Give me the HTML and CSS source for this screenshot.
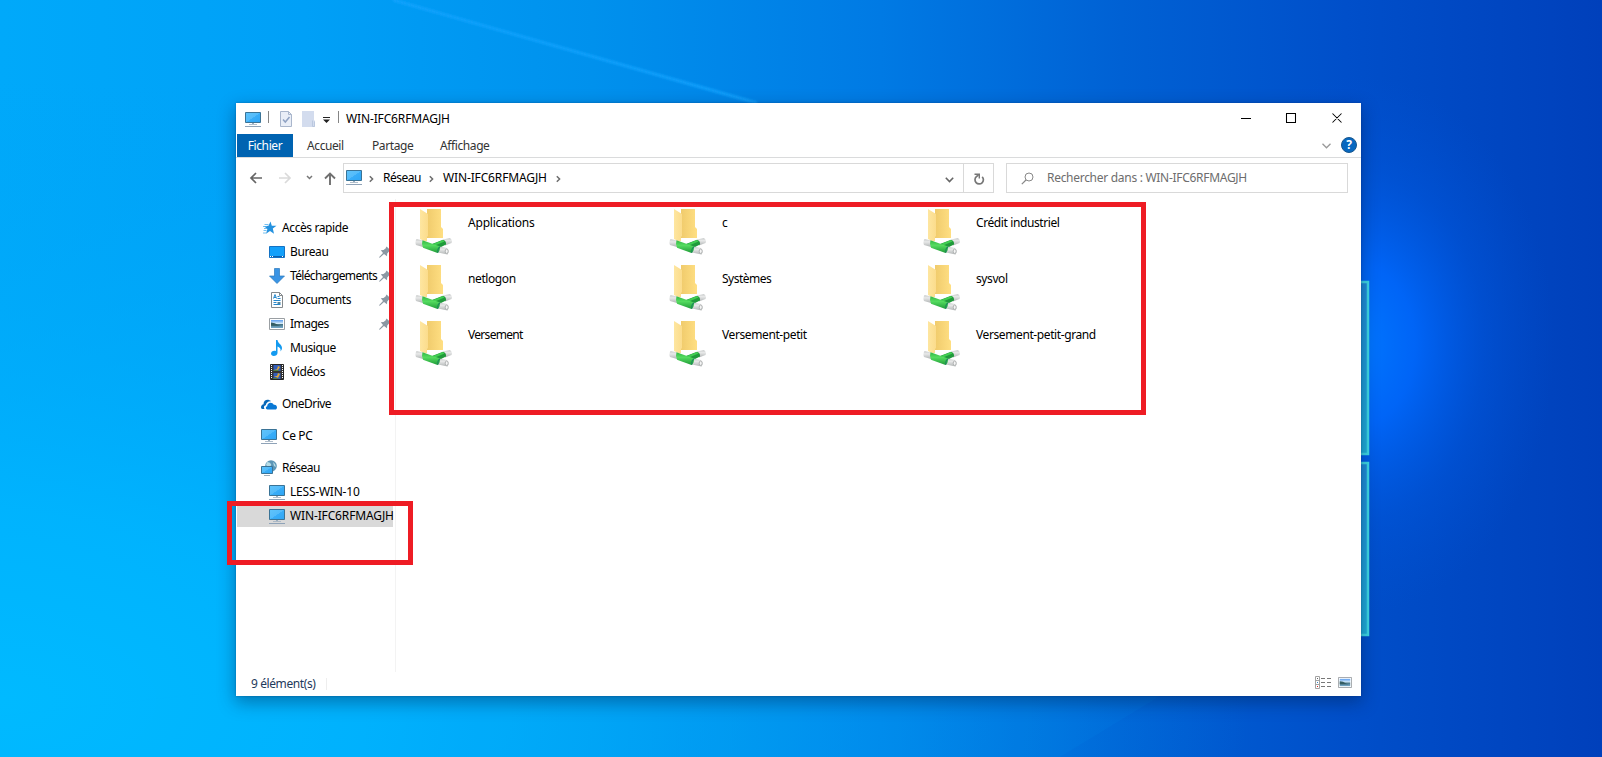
FILE: index.html
```html
<!DOCTYPE html>
<html lang="fr">
<head>
<meta charset="utf-8">
<title>WIN-IFC6RFMAGJH</title>
<link rel="stylesheet" href="styles.css">
</head>
<body>
<svg class="wallpaper" viewBox="0 0 1602 757" aria-hidden="true">
  <defs>
    <linearGradient id="sky" x1="0" x2="1" y1="0" y2="0">
      <stop offset="0" stop-color="#00a9fa"/><stop offset=".19" stop-color="#00a0f7"/><stop offset=".37" stop-color="#0091ed"/>
      <stop offset=".55" stop-color="#007ae4"/><stop offset=".7" stop-color="#0061d4"/><stop offset=".84" stop-color="#004fca"/><stop offset="1" stop-color="#0040bb"/>
    </linearGradient>
    <radialGradient id="corner" gradientUnits="userSpaceOnUse" cx="0" cy="0" r="1" gradientTransform="translate(0 700) scale(1250 620)">
      <stop offset="0" stop-color="#00baff"/><stop offset=".3" stop-color="#00b6ff" stop-opacity=".8"/><stop offset="1" stop-color="#00a0f4" stop-opacity="0"/>
    </radialGradient>
    <radialGradient id="glow"><stop offset="0" stop-color="#0078ff"/><stop offset=".3" stop-color="#0069ff" stop-opacity=".85"/><stop offset=".65" stop-color="#005ce8" stop-opacity=".35"/><stop offset="1" stop-color="#0054d8" stop-opacity="0"/></radialGradient>
    <linearGradient id="pane" x1="0" x2="0" y1="0" y2="1"><stop offset="0" stop-color="#1f8cd8"/><stop offset="1" stop-color="#1fb0da"/></linearGradient>
    <filter id="soft" x="-5%" y="-20%" width="110%" height="140%"><feGaussianBlur stdDeviation="1"/></filter>
  </defs>
  <rect width="1602" height="757" fill="url(#sky)"/>
  <rect width="1250" height="757" fill="url(#corner)"/>
  <ellipse cx="1355" cy="345" rx="200" ry="270" fill="url(#glow)"/>
  <path d="M393 0 757 103" stroke="#16a4ff" stroke-width="3" opacity=".8" filter="url(#soft)"/>
  <path d="M0 716 236 690 1160 696 1060 757H0Z" fill="#00b8ff" opacity=".06"/>
  <g fill="url(#pane)" stroke="#3fdae6" stroke-width="2.500"><path d="M1340 282h28v172h-28z"/><path d="M1340 463h28v172h-28z"/></g>
</svg>

<svg class="symbols" aria-hidden="true">
  <defs>
    <linearGradient id="screen" x1="0" x2="1" y1="0" y2="1"><stop offset="0" stop-color="#5fc4fb"/><stop offset=".5" stop-color="#54bbfa"/><stop offset=".52" stop-color="#38adf8"/><stop offset="1" stop-color="#2fa5f5"/></linearGradient>
    <linearGradient id="flap" x1="0" x2="1"><stop offset="0" stop-color="#fee6a0"/><stop offset="1" stop-color="#fbdc8c"/></linearGradient>
    <linearGradient id="back" x1="0" x2="1"><stop offset="0" stop-color="#f0cb6c"/><stop offset="1" stop-color="#ffdf83"/></linearGradient>
    <linearGradient id="pipe" x1="0" x2="0" y1="0" y2="1"><stop offset="0" stop-color="#32b545"/><stop offset=".4" stop-color="#55dc60"/><stop offset="1" stop-color="#209b38"/></linearGradient>
    <linearGradient id="tube" x1="0" x2="0" y1="0" y2="1"><stop offset="0" stop-color="#c6c9c9"/><stop offset=".35" stop-color="#e8e9e9"/><stop offset="1" stop-color="#b0b4b4"/></linearGradient>
    <linearGradient id="photo" x1="0" x2="0" y1="0" y2="1"><stop offset="0" stop-color="#5a9cf0"/><stop offset=".45" stop-color="#d7ecf8"/><stop offset=".55" stop-color="#477485"/><stop offset="1" stop-color="#76aacb"/></linearGradient>
    <symbol id="pc" viewBox="0 0 16 16">
      <path d="M.5 1.500h15v10H.5z" fill="url(#screen)" stroke="#3a7396"/>
      <path d="M7 12h2v1H7z" fill="#9aaec0"/><path d="M4 13h8v.8H4z" fill="#9fb0c0"/><path d="M0 15h16v1H0z" fill="#8fa3b8"/>
    </symbol>
    <symbol id="share" viewBox="0 0 37 46">
      <path d="M12 0h14v18l2 2v9H12z" fill="url(#back)"/>
      <path d="M5 0 13 5v22l-1 1v4H9L5 30z" fill="url(#flap)"/>
      <path d="M1.500 30Q-.3 33 1 36L8 38V31.500z" fill="url(#tube)"/>
      <path d="M28 30.500 35 29Q38 31.500 36.500 34L30 36.500z" fill="url(#tube)"/>
      <path d="M17 35 28 30.700Q31.500 32 31 35.500L22 40z" fill="#209a3b"/>
      <path d="M18 35 28 30.900 29.500 32.500 20 36.500z" fill="#41cd52"/>
      <path d="M24 37.500 32 39Q35 42 32.500 45.500L23 43.500z" fill="url(#tube)"/>
      <path d="M7.500 31.200Q6.300 35 8 38.800L22.500 44q2.800-2 2.500-6.500z" fill="url(#pipe)"/>
      <path d="M25 37.700q-2.700 2-2.200 6" fill="none" stroke="#1d8b5c" stroke-width="1.200"/>
      <ellipse cx="31.700" cy="42.200" rx="1.500" ry="2.200" fill="#f5f5f5" stroke="#a9adad" stroke-width=".9"/>
    </symbol>
    <symbol id="pin" viewBox="0 0 12 12"><path d="M7.500.5 11.800 4.500 10 5.500 8.200 7.500 8 10.300 5 8 .8 11.800 0 11.200 4 7 1.800 4.300 4.500 4.100 6.500 2.500z" fill="#8b98a3"/></symbol>
    <symbol id="next" viewBox="0 0 5 8"><path d="m.8 1.200 2.800 2.800L.8 6.800" fill="none" stroke="#6d6d6d" stroke-width="1.500"/></symbol>
    <symbol id="photoframe" viewBox="0 0 16 12"><path d="M.5.5h15v11H.5z" fill="#fff" stroke="#9a9fa3"/><path d="M2 2h12v8H2z" fill="url(#photo)"/><path d="M2 4.500q4 0 7 2.500l3 .8H2z" fill="#335c62"/></symbol>
  </defs>
</svg>

<main class="window">
  <header class="titlebar">
    <svg class="i16"><use href="#pc"/></svg><i class="sep s1"></i>
    <svg class="doc-check" viewBox="0 0 12 16"><path d="M.5.5h8l3 3v12H.5z" fill="#e9eef7" stroke="#a9b6cc"/><path d="M8.500.5v3h3" fill="none" stroke="#a9b6cc"/><path d="m3 8.500 2.300 2.500L9.500 6" fill="none" stroke="#8fa2c3" stroke-width="1.500"/></svg>
    <svg class="ghost" viewBox="0 0 13 16"><path d="M0 0h12v9l1 1v6H0z" fill="#d3dcee"/><path d="M10.500 9.500v6h2v-5" fill="none" stroke="#bac8df"/></svg>
    <svg class="customize" viewBox="0 0 7 6"><path d="M0 0h7v1H0zM0 2.500h7L3.500 6z" fill="#222"/></svg><i class="sep s2"></i>
    <h1 class="host">WIN-IFC6RFMAGJH</h1>
    <svg class="controls" viewBox="0 0 102 12"><path d="M0 6.500h10M45.500 1.500h9v9h-9zM91.500 1.500l9 9m0-9-9 9" fill="none" stroke="#000" stroke-width="1.050"/></svg>
  </header>
  <nav class="tabs">
    <b>Fichier</b><span class="accueil">Accueil</span><span class="partage">Partage</span><span class="affichage">Affichage</span>
    <svg class="ribbon-chevron" viewBox="0 0 9 6"><path d="m.5.8 4 4 4-4" fill="none" stroke="#999" stroke-width="1.300"/></svg>
    <span class="help">?</span>
  </nav>
  <section class="navigation">
    <svg class="history" viewBox="0 0 88 16" fill="none">
      <path d="M13 8H2m5-5L2 8l5 5" stroke="#656565" stroke-width="1.700"/><path d="M30 8h11m-5-5 5 5-5 5" stroke="#dadada" stroke-width="1.700"/><path d="m58 6 2.500 2.500L63 6" stroke="#777" stroke-width="1.500"/><path d="M81 15V3.500M76 8.500l5-5 5 5" stroke="#707070" stroke-width="1.900"/>
    </svg>
    <div class="address">
      <svg class="i16"><use href="#pc"/></svg><svg class="next n1"><use href="#next"/></svg><span class="crumb c1">Réseau</span><svg class="next n2"><use href="#next"/></svg><span class="crumb c2 host">WIN-IFC6RFMAGJH</span><svg class="next"><use href="#next"/></svg>
      <svg class="drop" viewBox="0 0 9 6"><path d="m.8.8 3.700 3.700L8.200.8" fill="none" stroke="#666" stroke-width="1.600"/></svg>
      <span class="refresh"><svg viewBox="0 0 12 12"><path d="M9.200 3.800A4.200 4.200 0 1 1 3.400 3.600L5.500 2" fill="none" stroke="#777" stroke-width="1.700"/><path d="M1.500 1.300h4.800v4.300" fill="none" stroke="#777" stroke-width="1.400"/></svg></span>
    </div>
    <div class="search"><svg viewBox="0 0 13 13"><circle cx="8" cy="5" r="4" fill="none" stroke="#888"/><path d="M5 8 .8 12.200" stroke="#888" stroke-width="1.200"/></svg><span>Rechercher dans : WIN-IFC6RFMAGJH</span></div>
  </section>
  <div class="body">
    <aside class="tree">
      <div class="row root"><svg class="i16" viewBox="0 0 16 16"><path d="m9.500 1.500 1.300 4.200 4.700.1-3.700 2.800 1.200 5.100-4-2.800-4 2.800 1.400-4.700L3 6.200l4.500-.5z" fill="#2592df"/><path d="M3.500 4.500h4M2 6.500h4M3 8.500h3M2.500 10.500h3M2 13h3" stroke="#52b0ed" stroke-width=".8"/></svg><span>Accès rapide</span></div>
      <div class="row"><svg class="i16" viewBox="0 0 16 16"><path d="M.5 2.500h15v11H.5z" fill="#13a0fa" stroke="#1472c4"/><path d="M1 12.500h14" stroke="#0b5fae"/><path d="M1 12.500h1m1 0h1m9 0h1" stroke="#fff"/></svg><span>Bureau</span><svg class="pin"><use href="#pin"/></svg></div>
      <div class="row"><svg class="i16" viewBox="0 0 16 16"><path d="M5.500.5h5V8h5L8 15.500.5 8h5z" fill="#3a94e4" stroke="#2878bd" stroke-width=".7"/></svg><span class="downloads">Téléchargements</span><svg class="pin"><use href="#pin"/></svg></div>
      <div class="row"><svg class="i16" viewBox="0 0 16 16"><path d="M2.500.5h8l3 3v12h-11z" fill="#fff" stroke="#84898c"/><path d="M10.500.5v3h3" fill="none" stroke="#84898c"/><path d="m4.500 6.500 1.500-4 1.500 4M5 5.500h2M8.500 4.500h2M8.500 6.500h3M4.500 8.500h7M4.500 10.500h3M4.500 12.500h7" stroke="#2889cd" fill="none"/><path d="M8.500 10h3v2h-3z" fill="#54879d"/></svg><span>Documents</span><svg class="pin"><use href="#pin"/></svg></div>
      <div class="row"><svg class="i16" viewBox="0 -2 16 16"><use href="#photoframe" width="16" height="12"/></svg><span class="snug">Images</span><svg class="pin"><use href="#pin"/></svg></div>
      <div class="row"><svg class="i16" viewBox="0 0 16 16"><path d="M7 0h1.500c.5 3.500 4.500 4.500 4.500 8 0 1.700-1 2.700-1.500 3.500.6-3-.8-4.300-3-5V13c0 2-2 3-3.700 3S2 15 2 13.500C2 11.500 4.500 10 7 11z" fill="#139af0"/></svg><span>Musique</span></div>
      <div class="row"><svg class="i16" viewBox="0 0 16 16"><path d="M1.500.5h13v15h-13z" fill="#343434" stroke="#252525"/><path d="M2.500 1v14M13.500 1v14" stroke="#fff" stroke-dasharray="1 1"/><path d="M4.500 1h7v6h-7zM4.500 9h7v6h-7z" fill="#315dbb"/><path d="M5 5h3l1-3 2 1-2 3zM5 12h3l1-3 2 1-2 4z" fill="#dda638"/><path d="M4.500 6h5v1h-5zM4.500 14h4v1h-4z" fill="#53843f"/></svg><span>Vidéos</span></div>
      <div class="row root gap"><svg class="i16" viewBox="0 0 16 16"><path d="M1.500 13C0 13-.2 11.500.2 10.300.6 9 1.700 8.300 2.500 8.200 2.500 3.500 7.500 2.500 10 5.300c-3-.2-5 1.700-5.200 4-2 .2-2.300 2.400-1.300 3.700z" fill="#0868b8"/><path d="M6.500 13.500C4.500 13.500 4.300 10.600 6.200 10.300 6.200 6 11.500 5.500 12.800 8.800c1.800-.4 3.200 1 3.200 2.600 0 1.200-.8 2.100-1.800 2.100z" fill="#0878d5"/></svg><span class="snug">OneDrive</span></div>
      <div class="row root gap"><svg class="i16"><use href="#pc"/></svg><span>Ce PC</span></div>
      <div class="row root gap"><svg class="i16" viewBox="0 0 16 16"><circle cx="10" cy="6" r="5.800" fill="#5c96b7"/><path d="M6 2q3 0 4 2t-3 3L5 5zM12 2q3 2 3 5l-2-1z" fill="#b6dce6"/><path d="M.5 6.500h11v7H.5z" fill="url(#screen)" stroke="#3a7396"/><path d="M3 15.500h6" stroke="#9caebc"/></svg><span class="snug">Réseau</span></div>
      <div class="row"><svg class="i16"><use href="#pc"/></svg><span class="less">LESS-WIN-10</span></div>
      <div class="row selected"><svg class="i16"><use href="#pc"/></svg><span class="host">WIN-IFC6RFMAGJH</span></div>
    </aside>
    <section class="files">
      <div class="file"><svg><use href="#share"/></svg><span class="wide">Applications</span></div>
      <div class="file"><svg><use href="#share"/></svg><span>c</span></div>
      <div class="file"><svg><use href="#share"/></svg><span>Crédit industriel</span></div>
      <div class="file"><svg><use href="#share"/></svg><span>netlogon</span></div>
      <div class="file"><svg><use href="#share"/></svg><span class="snug">Systèmes</span></div>
      <div class="file"><svg><use href="#share"/></svg><span>sysvol</span></div>
      <div class="file"><svg><use href="#share"/></svg><span class="tight">Versement</span></div>
      <div class="file"><svg><use href="#share"/></svg><span>Versement-petit</span></div>
      <div class="file"><svg><use href="#share"/></svg><span>Versement-petit-grand</span></div>
    </section>
  </div>
  <footer class="status"><span>9 élément(s)</span><i></i>
    <svg class="details" viewBox="0 0 17 13"><path d="M.5.5h4v12h-4zM.5 4.500h4M.5 8.500h4" fill="none" stroke="#a3a3a3"/><path d="M6 2.500h4m2 0h4M6 6.500h4m2 0h4M6 10.500h4m2 0h4" stroke="#777"/><path d="M2 2h1v1H2z" fill="#666"/><path d="M2 6h1v1H2z" fill="#3586c8"/><path d="M2 10h1v1H2z" fill="#d22"/></svg>
    <svg class="large" viewBox="0 0 16 12" preserveAspectRatio="none"><use href="#photoframe" width="16" height="12"/></svg>
  </footer>
</main>
<div class="mark mark-files"></div>
<div class="mark mark-server"></div>
</body>
</html>
```
FILE: styles.css
```css
* { box-sizing: border-box; }
body { margin: 0; width: 1602px; height: 757px; overflow: hidden; padding: 103px 0 0 236px; background: #008fe9; font: 12px/16px "Noto Sans", "Open Sans", sans-serif; letter-spacing: -.4px; color: #000; }
svg { display: block; flex: none; }
span, h1, b { white-space: nowrap; }
.wallpaper { position: absolute; left: 0; top: 0; width: 1602px; height: 757px; }
.symbols { position: absolute; width: 0; height: 0; }
.i16 { width: 16px; height: 16px; }
.window { position: relative; width: 1125px; height: 593px; display: flex; flex-direction: column; background: #fff; box-shadow: 0 6px 16px 1px rgba(0,25,65,.38), 0 0 2px rgba(0,30,80,.35); }
.titlebar { height: 31px; display: flex; align-items: center; padding: 0 18px 0 9px; }
.sep { width: 1px; height: 12px; background: #858585; }
.s1 { margin: 0 11px 3px 7px; }
.doc-check { width: 12px; height: 16px; margin-right: 10px; }
.ghost { width: 13px; height: 16px; margin-right: 8px; }
.customize { width: 7px; height: 6px; margin: 2px 8px 0 0; }
.s2 { margin: 0 7px 3px 0; }
h1 { margin: 0; font: inherit; }
.host { letter-spacing: -.14px; }
.less { letter-spacing: -.22px; }
.wide { letter-spacing: -.2px; }
.snug { letter-spacing: -.52px; }
.tight { letter-spacing: -.7px; }
.controls { width: 102px; height: 12px; margin: 0 0 1px auto; }
.tabs { height: 24px; display: flex; align-items: flex-start; padding: 0 4px 0 1px; border-bottom: 1px solid #dadbdc; color: #333; line-height: 24px; }
.tabs b { width: 56px; height: 23px; background: #0063b1; color: #fff; font-weight: 400; text-align: center; }
.accueil { width: 65px; margin-left: 14px; }
.partage { width: 68px; }
.ribbon-chevron { width: 9px; height: 6px; margin: 9px 10px 0 auto; }
.help { width: 16px; height: 16px; margin-top: 3px; border: 1px solid #18578e; border-radius: 50%; background: #0868c0; color: #fff; font-weight: 700; line-height: 14px; text-align: center; }
.navigation { height: 41px; display: flex; align-items: flex-start; padding: 5px 13px 0 13px; }
.history { width: 88px; height: 16px; margin: 7px 6px 0 0; }
.address { width: 651px; height: 30px; display: flex; align-items: center; padding-left: 2px; border: 1px solid #d9d9d9; }
.address > .i16 { margin-bottom: 2px; }
.next { width: 5px; height: 8px; margin-top: 1px; }
.n1 { margin-left: 7px; margin-right: 9px; }
.c1 { width: 46px; letter-spacing: -.5px; }
.n2 { margin-right: 9px; }
.c2 { width: 113px; }
.drop { width: 9px; height: 6px; margin: 4px 9px 0 auto; }
.refresh { width: 30px; height: 28px; border-left: 1px solid #d9d9d9; padding: 9px 0 0 9px; }
.refresh svg { width: 12px; height: 12px; }
.search { width: 342px; height: 30px; margin-left: 12px; display: flex; align-items: center; padding-left: 14px; border: 1px solid #d9d9d9; color: #6d6d6d; letter-spacing: -.29px; }
.search svg { width: 13px; height: 13px; margin-right: 13px; }
.body { flex: 1; display: flex; min-height: 0; }
.tree { width: 160px; border-right: 1px solid #f3f3f3; padding-top: 17px; }
.row { width: 156px; height: 24px; margin-left: 1px; padding-left: 32px; display: flex; align-items: center; gap: 5px; }
.row.root { padding-left: 24px; }
.row.gap { margin-top: 8px; }
.row.selected { height: 22px; margin-top: 1px; background: #d9d9d9; }
.pin { width: 12px; height: 12px; margin-left: auto; margin-right: 2px; }
.downloads { width: 84px; letter-spacing: -.65px; }
.files { display: grid; grid-template: repeat(3, 56px) / repeat(3, 254px); padding: 10px 0 0 19px; }
.file { display: flex; align-items: flex-start; gap: 16px; }
.file svg { width: 37px; height: 46px; }
.file span { padding-top: 6px; }
.status { height: 24px; display: flex; align-items: center; padding: 0 9px 0 15px; color: #1e395b; }
.status i { width: 1px; height: 12px; margin-left: 10px; background: #eee; }
.details { width: 17px; height: 13px; margin: 0 6px 4px auto; }
.large { width: 14px; height: 11px; margin-bottom: 4px; }
.mark { position: absolute; border: 5px solid #ee1c24; }
.mark-files { left: 389px; top: 202px; width: 757px; height: 213px; }
.mark-server { left: 227px; top: 501px; width: 186px; height: 64px; }
```
